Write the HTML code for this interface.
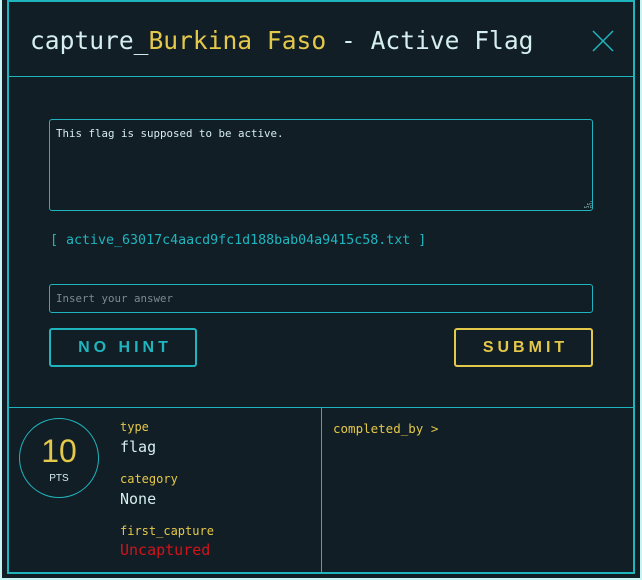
<!DOCTYPE html>
<html><head><style>
*{margin:0;padding:0;box-sizing:border-box}
body{width:642px;height:580px;background:#121e25;position:relative;overflow:hidden;font-family:"DejaVu Sans Mono","Liberation Mono",monospace;color:#d5eeee}
.a{position:absolute}
.t{color:#1fb5bf}.y{color:#e4c84a}
</style></head><body>
<div class="a" style="left:0;top:0;width:642px;height:580px;border-left:2px solid #c8f4f4;border-bottom:2px solid #c8f4f4;border-right:2px solid #c8f4f4"></div>
<div class="a" style="left:7px;top:0;width:628px;height:574px;border:2px solid #1fb5bf"></div>
<div class="a" style="left:8px;top:76px;width:626px;height:1px;background:#1fb5bf"></div>
<div class="a" style="left:8px;top:407px;width:626px;height:1px;background:#1fb5bf"></div>
<div class="a" style="left:321px;top:407px;width:1px;height:166px;background:#1fb5bf"></div>
<div class="a" style="left:30px;top:25px;font-size:24.6px;line-height:32px;white-space:pre">capture_<span class="y">Burkina Faso</span> - Active Flag</div>
<svg class="a" style="left:592px;top:30px" width="22" height="22"><path d="M1 1L21 21M21 1L1 21" stroke="#1fb5bf" stroke-width="1.5"/></svg>
<div class="a" style="left:49px;top:119px;width:544px;height:92px;border:1px solid #1fb5bf;border-radius:3px"></div>
<svg class="a" style="left:583px;top:200px" width="9" height="9"><path d="M8 1v7M5 4v4M2 7v1M1 7h7M4 4h4" stroke="#8aa" stroke-width="1" stroke-dasharray="1 1"/></svg>
<div class="a" style="left:56px;top:127px;font-size:10.8px">This flag is supposed to be active.</div>
<div class="a t" style="left:50px;top:233px;font-size:13.3px;white-space:pre">[ active_63017c4aacd9fc1d188bab04a9415c58.txt ]</div>
<div class="a" style="left:49px;top:284px;width:544px;height:29px;border:1px solid #1fb5bf;border-radius:3px"></div>
<div class="a" style="left:56px;top:292px;font-size:10.8px;color:#7c8a8e">Insert your answer</div>
<div class="a t" style="left:49px;top:328px;width:148px;height:39px;border:2px solid #1fb5bf;border-radius:3px;font:bold 16px 'Liberation Sans',sans-serif;letter-spacing:4px;text-align:center;line-height:35px;padding-left:4px">NO HINT</div>
<div class="a y" style="left:454px;top:328px;width:139px;height:39px;border:2px solid #e4c84a;border-radius:3px;font:bold 16px 'Liberation Sans',sans-serif;letter-spacing:4px;text-align:center;line-height:35px;padding-left:4px">SUBMIT</div>
<div class="a" style="left:19px;top:418px;width:80px;height:80px;border:1px solid #1fb5bf;border-radius:50%"></div>
<div class="a y" style="left:19px;top:433px;width:80px;text-align:center;font:32px 'Liberation Sans',sans-serif">10</div>
<div class="a" style="left:19px;top:473px;width:80px;text-align:center;font:10px 'Liberation Sans',sans-serif">PTS</div>
<div class="a y" style="left:120px;top:420px;font-size:12px">type</div>
<div class="a" style="left:120px;top:438px;font-size:15px">flag</div>
<div class="a y" style="left:120px;top:472px;font-size:12px">category</div>
<div class="a" style="left:120px;top:490px;font-size:15px">None</div>
<div class="a y" style="left:120px;top:524px;font-size:12px">first_capture</div>
<div class="a" style="left:120px;top:541px;font-size:15px;color:#d0141a">Uncaptured</div>
<div class="a y" style="left:333px;top:421px;font-size:12.5px">completed_by &gt;</div>
</body></html>
